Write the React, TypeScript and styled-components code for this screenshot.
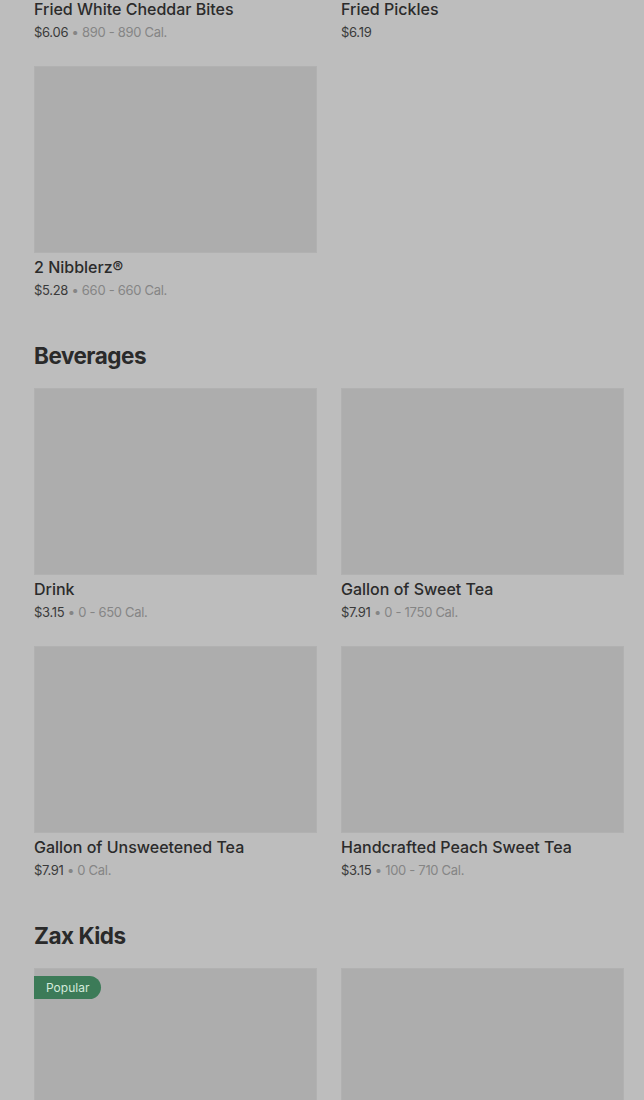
import React from "react";
import styled, { createGlobalStyle } from "styled-components";

const Global = createGlobalStyle`
  html, body { margin: 0; padding: 0; background: #bdbdbd; overflow: hidden; }
  body { font-family: Inter, "Noto Sans", Arial, sans-serif; }
`;

const Page = styled.div`
  padding: 0 20px 0 34px;
  margin-top: -192px;
`;

const Section = styled.section``;

const Heading = styled.h2`
  margin: 40px 0 16px;
  font-size: 22.5px;
  line-height: 32px;
  font-weight: 700;
  letter-spacing: -0.5px;
  color: #2a2a2a;
`;

const Grid = styled.div`
  display: grid;
  grid-template-columns: 283px 283px;
  column-gap: 24px;
  row-gap: 24px;
`;

const Card = styled.div`
  display: flex;
  flex-direction: column;
  height: 234px;
`;

const Thumb = styled.div`
  position: relative;
  flex-shrink: 0;
  height: 187px;
  background: #adadad;
  box-shadow: inset 0 0 0 1px #b1b1b1;
`;

const Badge = styled.span`
  position: absolute;
  top: 8px;
  left: 0;
  height: 23px;
  padding: 0 12px;
  display: flex;
  align-items: center;
  background: #3c7b58;
  color: #d4eadc;
  font-size: 12px;
  border-radius: 0 12px 12px 0;
`;

const Title = styled.div`
  margin-top: 2px;
  font-size: 16px;
  line-height: 24px;
  font-weight: 500;
  color: #2b2b2b;
`;

const Meta = styled.div`
  margin-top: 1px;
  font-size: 13px;
  line-height: 20px;
  color: #3a3a3a;
  letter-spacing: -0.3px;
`;

const Cal = styled.span`
  color: #858585;
`;

type Item = { name?: string; price?: string; cal?: string; popular?: boolean };

const sections: { title?: string; items: Item[] }[] = [
  {
    items: [
      { name: "Fried White Cheddar Bites", price: "$6.06", cal: "890 - 890 Cal." },
      { name: "Fried Pickles", price: "$6.19" },
      { name: "2 Nibblerz®", price: "$5.28", cal: "660 - 660 Cal." },
    ],
  },
  {
    title: "Beverages",
    items: [
      { name: "Drink", price: "$3.15", cal: "0 - 650 Cal." },
      { name: "Gallon of Sweet Tea", price: "$7.91", cal: "0 - 1750 Cal." },
      { name: "Gallon of Unsweetened Tea", price: "$7.91", cal: "0 Cal." },
      { name: "Handcrafted Peach Sweet Tea", price: "$3.15", cal: "100 - 710 Cal." },
    ],
  },
  {
    title: "Zax Kids",
    items: [{ popular: true }, {}],
  },
];

export default function App() {
  return (
    <>
      <Global />
      <Page>
        {sections.map((s, i) => (
          <Section key={i}>
            {s.title && <Heading>{s.title}</Heading>}
            <Grid>
              {s.items.map((it, j) => (
                <Card key={j}>
                  <Thumb>{it.popular && <Badge>Popular</Badge>}</Thumb>
                  {it.name && <Title>{it.name}</Title>}
                  {it.price && (
                    <Meta>
                      {it.price}
                      {it.cal && <Cal> • {it.cal}</Cal>}
                    </Meta>
                  )}
                </Card>
              ))}
            </Grid>
          </Section>
        ))}
      </Page>
    </>
  );
}
